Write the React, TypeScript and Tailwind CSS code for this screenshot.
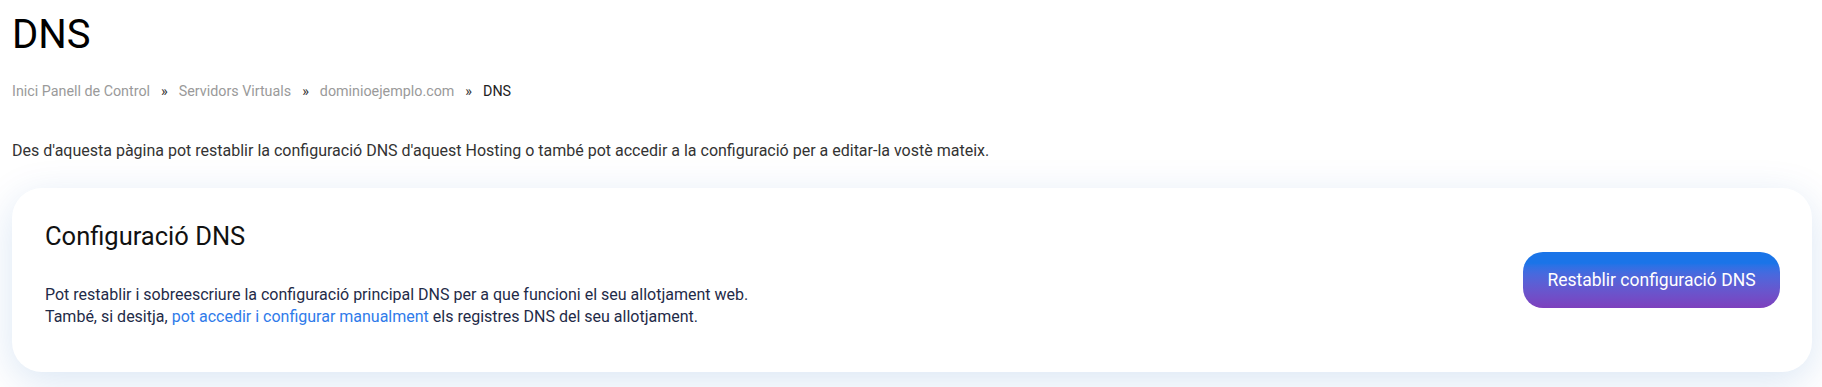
export default function App() {
  const crumbs = ['Inici Panell de Control', 'Servidors Virtuals', 'dominioejemplo.com'];

  return (
    <div className="min-h-screen bg-white px-3 pt-[11px] font-['Roboto',sans-serif]">
      {/* Page title */}
      <h1 className="text-[40px] leading-[48px] font-normal text-black">DNS</h1>

      {/* Breadcrumb */}
      <nav className="mt-[22px] flex items-center text-[14.3px] leading-5">
        {crumbs.map((c) => (
          <span key={c} className="flex items-center">
            <a className="text-[#9a9a9a]">{c}</a>
            <span className="mx-[11px] text-[#333]">»</span>
          </span>
        ))}
        <span className="text-[#222]">DNS</span>
      </nav>

      {/* Intro */}
      <p className="mt-[38px] text-[16px] leading-6 text-[#333]">
        Des d'aquesta pàgina pot restablir la configuració DNS d'aquest Hosting o també pot accedir a la configuració per a editar-la vostè mateix.
      </p>

      {/* Card */}
      <div className="mt-[25px] mr-[-2px] flex items-center justify-between rounded-[30px] bg-white pl-[33px] pr-8 pt-8 pb-[31px] shadow-[0_10px_40px_rgba(0,90,180,0.15)]">
        <div>
          <h2 className="text-[25.5px] leading-8 font-normal text-[#111]">Configuració DNS</h2>
          <p className="mt-8 mb-3 text-[16px] leading-[22.4px] text-[#1f2b48]">
            Pot restablir i sobreescriure la configuració principal DNS per a que funcioni el seu allotjament web.
            <br />
            També, si desitja, <a className="text-[#2f7bea]">pot accedir i configurar manualment</a> els registres DNS del seu allotjament.
          </p>
        </div>
        <button className="h-14 w-[257px] rounded-[20px] bg-gradient-to-b from-[#1a74e8] from-20% to-[#7d3fbd] text-[17.5px] text-white">
          Restablir configuració DNS
        </button>
      </div>
    </div>
  );
}
